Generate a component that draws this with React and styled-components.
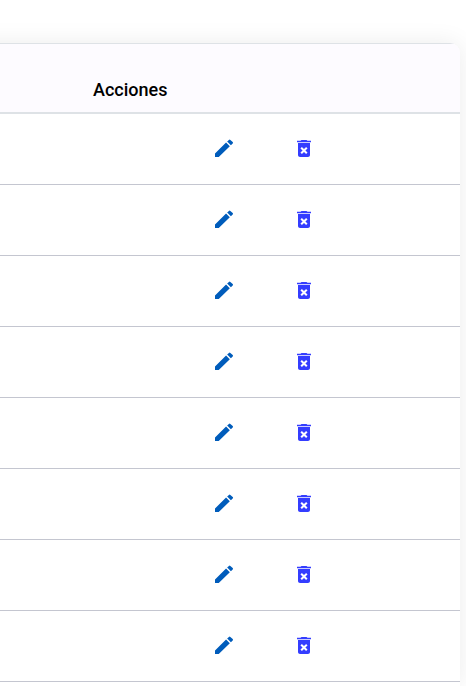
import React from "react";
import styled, { createGlobalStyle } from "styled-components";

const GlobalStyle = createGlobalStyle`
  *, *::before, *::after { box-sizing: border-box; }
  body { margin: 0; background: #ffffff; font-family: Roboto, sans-serif; }
`;

const Page = styled.main`
  display: flex;
  flex-direction: column;
  min-height: 100vh;
  padding: 43px 6px 0 0;
  overflow: hidden;
`;

const Card = styled.section`
  flex: 1;
  margin-left: -40px;
  padding-left: 40px;
  overflow: hidden;
  background: #ffffff;
  border-radius: 0 10px 0 0;
  box-shadow: 0 0 24px rgba(0, 0, 0, 0.08);
`;

const Table = styled.table`
  width: 100%;
  border-spacing: 0;
`;

const HeaderCell = styled.th`
  height: 71px;
  padding: 24px 16px 0 93px;
  background: #fdfbff;
  border-top: 1px solid #dee2e6;
  border-bottom: 2px solid #dee2e6;
  color: #000000;
  font-size: 18px;
  font-weight: 500;
  line-height: 24px;
  text-align: left;
  vertical-align: middle;
`;

const Cell = styled.td`
  height: 71px;
  padding: 0 16px 2px 200px;
  border-bottom: 1px solid #c4c6d0;
`;

const Actions = styled.div`
  display: flex;
  align-items: center;
  gap: 32px;
`;

const IconButton = styled.button`
  display: flex;
  align-items: center;
  justify-content: center;
  width: 48px;
  height: 48px;
  padding: 0;
  border: 0;
  border-radius: 50%;
  background: transparent;
  color: ${({ $tone }) => ($tone === "remove" ? "#343dff" : "#005cbb")};
  cursor: pointer;

  &:hover { background: #f1f1fb; }
`;

const Icon = styled.svg`
  width: 24px;
  height: 24px;
  fill: currentColor;
`;

const EditIcon = () => (
  <Icon viewBox="0 0 24 24" aria-hidden="true">
    <path d="M3 17.6V21h3.75L17.81 10.3l-3.75-3.75L3 17.6zM20.71 7.4a.996.996 0 0 0 0-1.41l-2.34-2.1a.996.996 0 0 0-1.41 0l-1.83 1.59 3.75 3.75 1.83-1.83z" />
  </Icon>
);

const DeleteIcon = () => (
  <Icon viewBox="0 0 24 24" aria-hidden="true">
    <path d="M6 19c0 1.1.9 2 2 2h8c1.1 0 2-.9 2-2V7H6v12zm2.46-6.62 1.41-1.41L12 13.09l2.12-2.12 1.41 1.41L13.41 14.5l2.12 2.12-1.41 1.41L12 15.91l-2.12 2.12-1.41-1.41L10.59 14.5l-2.13-2.12zM15.5 4.8l-1-.9h-5l-1 .9H5v1.5h14V4.8z" />
  </Icon>
);

const rows = [1, 2, 3, 4, 5, 6, 7, 8];

export default function App() {
  return (
    <>
      <GlobalStyle />
      <Page>
        <Card>
          <Table>
            <thead>
              <tr>
                <HeaderCell scope="col">Acciones</HeaderCell>
              </tr>
            </thead>
            <tbody>
              {rows.map((id) => (
                <tr key={id}>
                  <Cell>
                    <Actions>
                      <IconButton type="button" $tone="edit" aria-label="Editar">
                        <EditIcon />
                      </IconButton>
                      <IconButton type="button" $tone="remove" aria-label="Eliminar">
                        <DeleteIcon />
                      </IconButton>
                    </Actions>
                  </Cell>
                </tr>
              ))}
            </tbody>
          </Table>
        </Card>
      </Page>
    </>
  );
}
